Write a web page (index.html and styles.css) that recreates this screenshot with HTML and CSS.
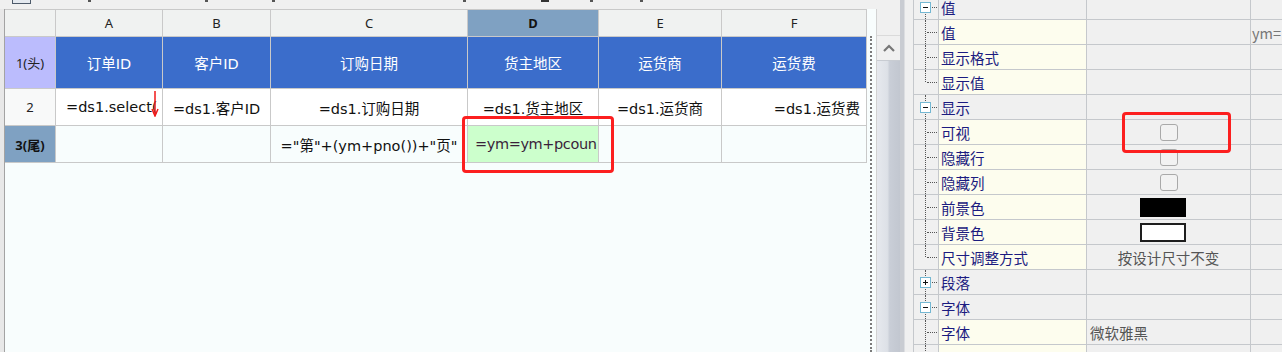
FILE: index.html
```html
<!DOCTYPE html>
<html lang="zh">
<head>
  <meta charset="UTF-8" />
  <title>报表设计</title>
  <link rel="stylesheet" href="styles.css">
</head>
<body>
  <div class="app">
    <div class="sheet-pane">
      <div class="toolbar">
        <span class="tb-icon"></span>
        <span class="tb-bit b1"></span>
        <span class="tb-bit b2"></span>
        <span class="tb-bit b3"></span>
        <span class="tb-bit b4"></span>
        <span class="tb-bit b5 wide"></span>
        <span class="tb-bit b6"></span>
        <span class="tb-bit b7"></span>
      </div>
      <div class="sheet-body">
        <div class="sheet-area">
          <div class="grid">
            <div class="colhead"></div>
            <div class="colhead">A</div>
            <div class="colhead">B</div>
            <div class="colhead">C</div>
            <div class="colhead sel">D</div>
            <div class="colhead">E</div>
            <div class="colhead">F</div>

            <div class="rowhead head">1(头)</div>
            <div class="cell title">订单ID</div>
            <div class="cell title">客户ID</div>
            <div class="cell title">订购日期</div>
            <div class="cell title">货主地区</div>
            <div class="cell title">运货商</div>
            <div class="cell title">运货费</div>

            <div class="rowhead">2</div>
            <div class="cell data left">=ds1.select(<svg class="drill" width="8" height="26" viewBox="0 0 8 26"><line x1="4" y1="0" x2="4" y2="24" stroke="#f01818" stroke-width="1.5"/><path d="M1 18 L4 25 L7 18" fill="none" stroke="#f01818" stroke-width="1.5"/></svg></div>
            <div class="cell data">=ds1.客户ID</div>
            <div class="cell data">=ds1.订购日期</div>
            <div class="cell data">=ds1.货主地区</div>
            <div class="cell data">=ds1.运货商</div>
            <div class="cell data right">=ds1.运货费</div>

            <div class="rowhead foot">3(尾)</div>
            <div class="cell tail"></div>
            <div class="cell tail"></div>
            <div class="cell tail">="第"+(ym+pno())+"页"</div>
            <div class="cell tail active">=ym=ym+pcoun</div>
            <div class="cell tail"></div>
            <div class="cell tail"></div>
          </div>
          <div class="page-edge"></div>
        </div>
        <div class="vscroll">
          <div class="up-btn">
            <svg width="12" height="8" viewBox="0 0 12 8"><path d="M1 7 L6 2 L11 7" fill="none" stroke="#777" stroke-width="2.2"/></svg>
          </div>
          <div class="track"></div>
        </div>
      </div>
    </div>

    <div class="divider"></div>

    <div class="props-pane">
      <div class="props">
        <div class="tree first"><span class="box minus"></span></div>
        <div class="name group">值</div>
        <div class="val"></div>
        <div class="extra"></div>

        <div class="tree child"></div>
        <div class="name">值</div>
        <div class="val"></div>
        <div class="extra">ym=</div>

        <div class="tree child"></div>
        <div class="name">显示格式</div>
        <div class="val"></div>
        <div class="extra"></div>

        <div class="tree child last"></div>
        <div class="name">显示值</div>
        <div class="val"></div>
        <div class="extra"></div>

        <div class="tree"><span class="box minus"></span></div>
        <div class="name group">显示</div>
        <div class="val"></div>
        <div class="extra"></div>

        <div class="tree child"></div>
        <div class="name">可视</div>
        <div class="val center"><span class="check"></span></div>
        <div class="extra"></div>

        <div class="tree child"></div>
        <div class="name">隐藏行</div>
        <div class="val center"><span class="check"></span></div>
        <div class="extra"></div>

        <div class="tree child"></div>
        <div class="name">隐藏列</div>
        <div class="val center"><span class="check"></span></div>
        <div class="extra"></div>

        <div class="tree child"></div>
        <div class="name">前景色</div>
        <div class="val center"><span class="swatch black"></span></div>
        <div class="extra"></div>

        <div class="tree child"></div>
        <div class="name">背景色</div>
        <div class="val center"><span class="swatch white"></span></div>
        <div class="extra"></div>

        <div class="tree child last"></div>
        <div class="name">尺寸调整方式</div>
        <div class="val center">按设计尺寸不变</div>
        <div class="extra"></div>

        <div class="tree"><span class="box plus"></span></div>
        <div class="name group">段落</div>
        <div class="val"></div>
        <div class="extra"></div>

        <div class="tree"><span class="box minus"></span></div>
        <div class="name group">字体</div>
        <div class="val"></div>
        <div class="extra"></div>

        <div class="tree child"></div>
        <div class="name">字体</div>
        <div class="val">微软雅黑</div>
        <div class="extra"></div>

        <div class="tree child"></div>
        <div class="name"></div>
        <div class="val"></div>
        <div class="extra"></div>
      </div>
    </div>

    <div class="mark mark-cell"></div>
    <div class="mark mark-prop"></div>
  </div>
</body>
</html>
```

FILE: styles.css
```css
body {
  margin: 0;
  padding: 0;
  font-family: "DejaVu Sans", "Noto Sans CJK SC", sans-serif;
  background: #f0f0f0;
}

.app {
  position: relative;
  display: flex;
  width: 1282px;
  height: 352px;
  overflow: hidden;
}

/* ---------- report sheet ---------- */

.sheet-pane {
  flex: 0 0 899px;
  display: flex;
  flex-direction: column;
  background: #e8e8e8;
}

.toolbar {
  position: relative;
  height: 9px;
  overflow: hidden;
  background: #f0f0f0;
}

.tb-icon {
  position: absolute;
  left: 12px;
  top: -8px;
  width: 17px;
  height: 10px;
  border: 1px solid #4d5a6a;
  background: #e4e9ef;
}

.tb-bit {
  position: absolute;
  top: 0;
  width: 3px;
  height: 2px;
  background: #555;
}

.tb-bit.wide { width: 8px; }

.b1 { left: 88px; }
.b2 { left: 205px; }
.b3 { left: 272px; }
.b4 { left: 463px; }
.b5 { left: 541px; background: #333; }
.b6 { left: 590px; }
.b7 { left: 640px; }

.sheet-body {
  flex: 1;
  display: flex;
  padding-left: 4px;
}

.sheet-area {
  flex: 0 0 871px;
  display: flex;
  align-items: flex-start;
  border-left: 1px solid #a3a3a3;
  background: #f8fdfd;
}

.grid {
  display: grid;
  grid-template-columns: 50px 106px 107px 196px 130px 122px 144px;
  grid-template-rows: 26px 51px 36px 36px;
  gap: 1px;
  background: #c9c9c9;
  border: 1px solid #c9c9c9;
  border-left: none;
  font-size: 14.5px;
}

.grid > div {
  display: flex;
  align-items: center;
  justify-content: center;
  white-space: nowrap;
  overflow: hidden;
}

.colhead {
  background: #f0f2f1;
  font-family: "Noto Sans", sans-serif;
  font-size: 13px;
  color: #222;
}

.colhead.sel {
  background: #7fa1c2;
  font-weight: bold;
  color: #111;
}

.rowhead {
  background: #f8f9f9;
  font-family: "Noto Sans", "Noto Sans CJK SC", sans-serif;
  font-size: 13px;
  color: #222;
}

.rowhead.head {
  background: #bbbcfd;
}

.rowhead.foot {
  background: #7fa1c2;
  font-weight: bold;
  color: #111;
}

.cell.title {
  background: #3b6dcb;
  color: #fff;
}

.cell.data {
  background: #fff;
  color: #111;
}

.cell.tail {
  background: #f8fdfd;
  color: #111;
}

.grid > .cell.left {
  justify-content: flex-start;
  padding-left: 10px;
  position: relative;
}

.grid > .cell.right {
  justify-content: flex-end;
  padding-right: 6px;
}

.grid > .cell.active {
  justify-content: flex-start;
  padding-left: 7px;
  background: #ccffcc;
  color: #3a1f3a;
  letter-spacing: -0.4px;
}

.drill {
  position: absolute;
  left: 95px;
  top: 2px;
}

.page-edge {
  width: 0;
  height: 316px;
  margin: 27px 0 0 3px;
  border-left: 2px dotted #7a7a7a;
}

.vscroll {
  flex: 0 0 23px;
  display: flex;
  flex-direction: column;
  padding-top: 26px;
  background: #f0f0f0;
  border-left: 1px solid #d2d2d2;
}

.up-btn {
  height: 24px;
  display: flex;
  align-items: center;
  justify-content: center;
  background: #f0f0f0;
  border-top: 1px solid #dadada;
  border-bottom: 1px solid #c8ccd2;
}

.track {
  flex: 1;
  background: linear-gradient(to right, #e6e9ee 0, #dde1e7 45%, #c9ced7 55%, #c2c7d0 100%);
}

.divider {
  flex: 0 0 13px;
  background: linear-gradient(to right, #c9ccd2 0, #c9ccd2 4px, #f0f0f0 5px);
}

/* ---------- property panel ---------- */

.props-pane {
  flex: 1;
  min-width: 0;
  background: #f0f0f0;
}

.props {
  display: grid;
  grid-template-columns: 24px 147px 163px 40px;
  grid-auto-rows: 24px;
  gap: 1px;
  margin-top: -5px;
  background: #c5c8cc;
  border-left: 1px solid #c5c8cc;
  font-family: "Noto Sans CJK SC", sans-serif;
  font-size: 14.5px;
}

.props > div {
  display: flex;
  align-items: center;
  white-space: nowrap;
  overflow: hidden;
}

.tree {
  position: relative;
  background: #f0f0f0;
}

.tree::before {
  content: "";
  position: absolute;
  left: 11px;
  top: 0;
  bottom: 0;
  border-left: 1px dotted #555;
}

.tree.first::before { top: 12px; }
.tree.last::before { bottom: 12px; }

.tree::after {
  content: "";
  position: absolute;
  left: 13px;
  right: 1px;
  top: 12px;
  border-top: 1px dotted #555;
}

.box {
  position: absolute;
  left: 6px;
  top: 7px;
  width: 9px;
  height: 9px;
  border: 1px solid #74b7d2;
  background: #fff;
  z-index: 1;
}

.box::before {
  content: "";
  position: absolute;
  left: 2px;
  top: 4px;
  width: 5px;
  height: 1px;
  background: #111;
}

.box.plus::after {
  content: "";
  position: absolute;
  left: 4px;
  top: 2px;
  width: 1px;
  height: 5px;
  background: #111;
}

.name {
  background: #fdfdee;
  color: #1b1b80;
  padding-left: 2px;
}

.name.group {
  background: #f0f0f0;
}

.val {
  background: #f0f0f0;
  color: #555;
  padding-left: 3px;
}

.props > .val.center {
  justify-content: center;
  padding-left: 0;
}

.extra {
  background: #f0f0f0;
  color: #777;
  padding-left: 1px;
}

.check {
  width: 16px;
  height: 15px;
  border: 1px solid #a9a9a9;
  border-radius: 3px;
  background: #f2f2f2;
}

.swatch {
  width: 46px;
  height: 19px;
  margin-right: 11px;
  box-sizing: border-box;
}

.swatch.black {
  background: #000;
}

.swatch.white {
  background: #fff;
  border: 2px solid #1e1e1e;
}

/* ---------- red annotation boxes ---------- */

.mark {
  position: absolute;
  border: 3px solid #fc1f1f;
  border-radius: 4px;
  box-sizing: border-box;
}

.mark-cell {
  left: 462px;
  top: 116px;
  width: 152px;
  height: 57px;
}

.mark-prop {
  left: 1122px;
  top: 112px;
  width: 109px;
  height: 41px;
}
```
